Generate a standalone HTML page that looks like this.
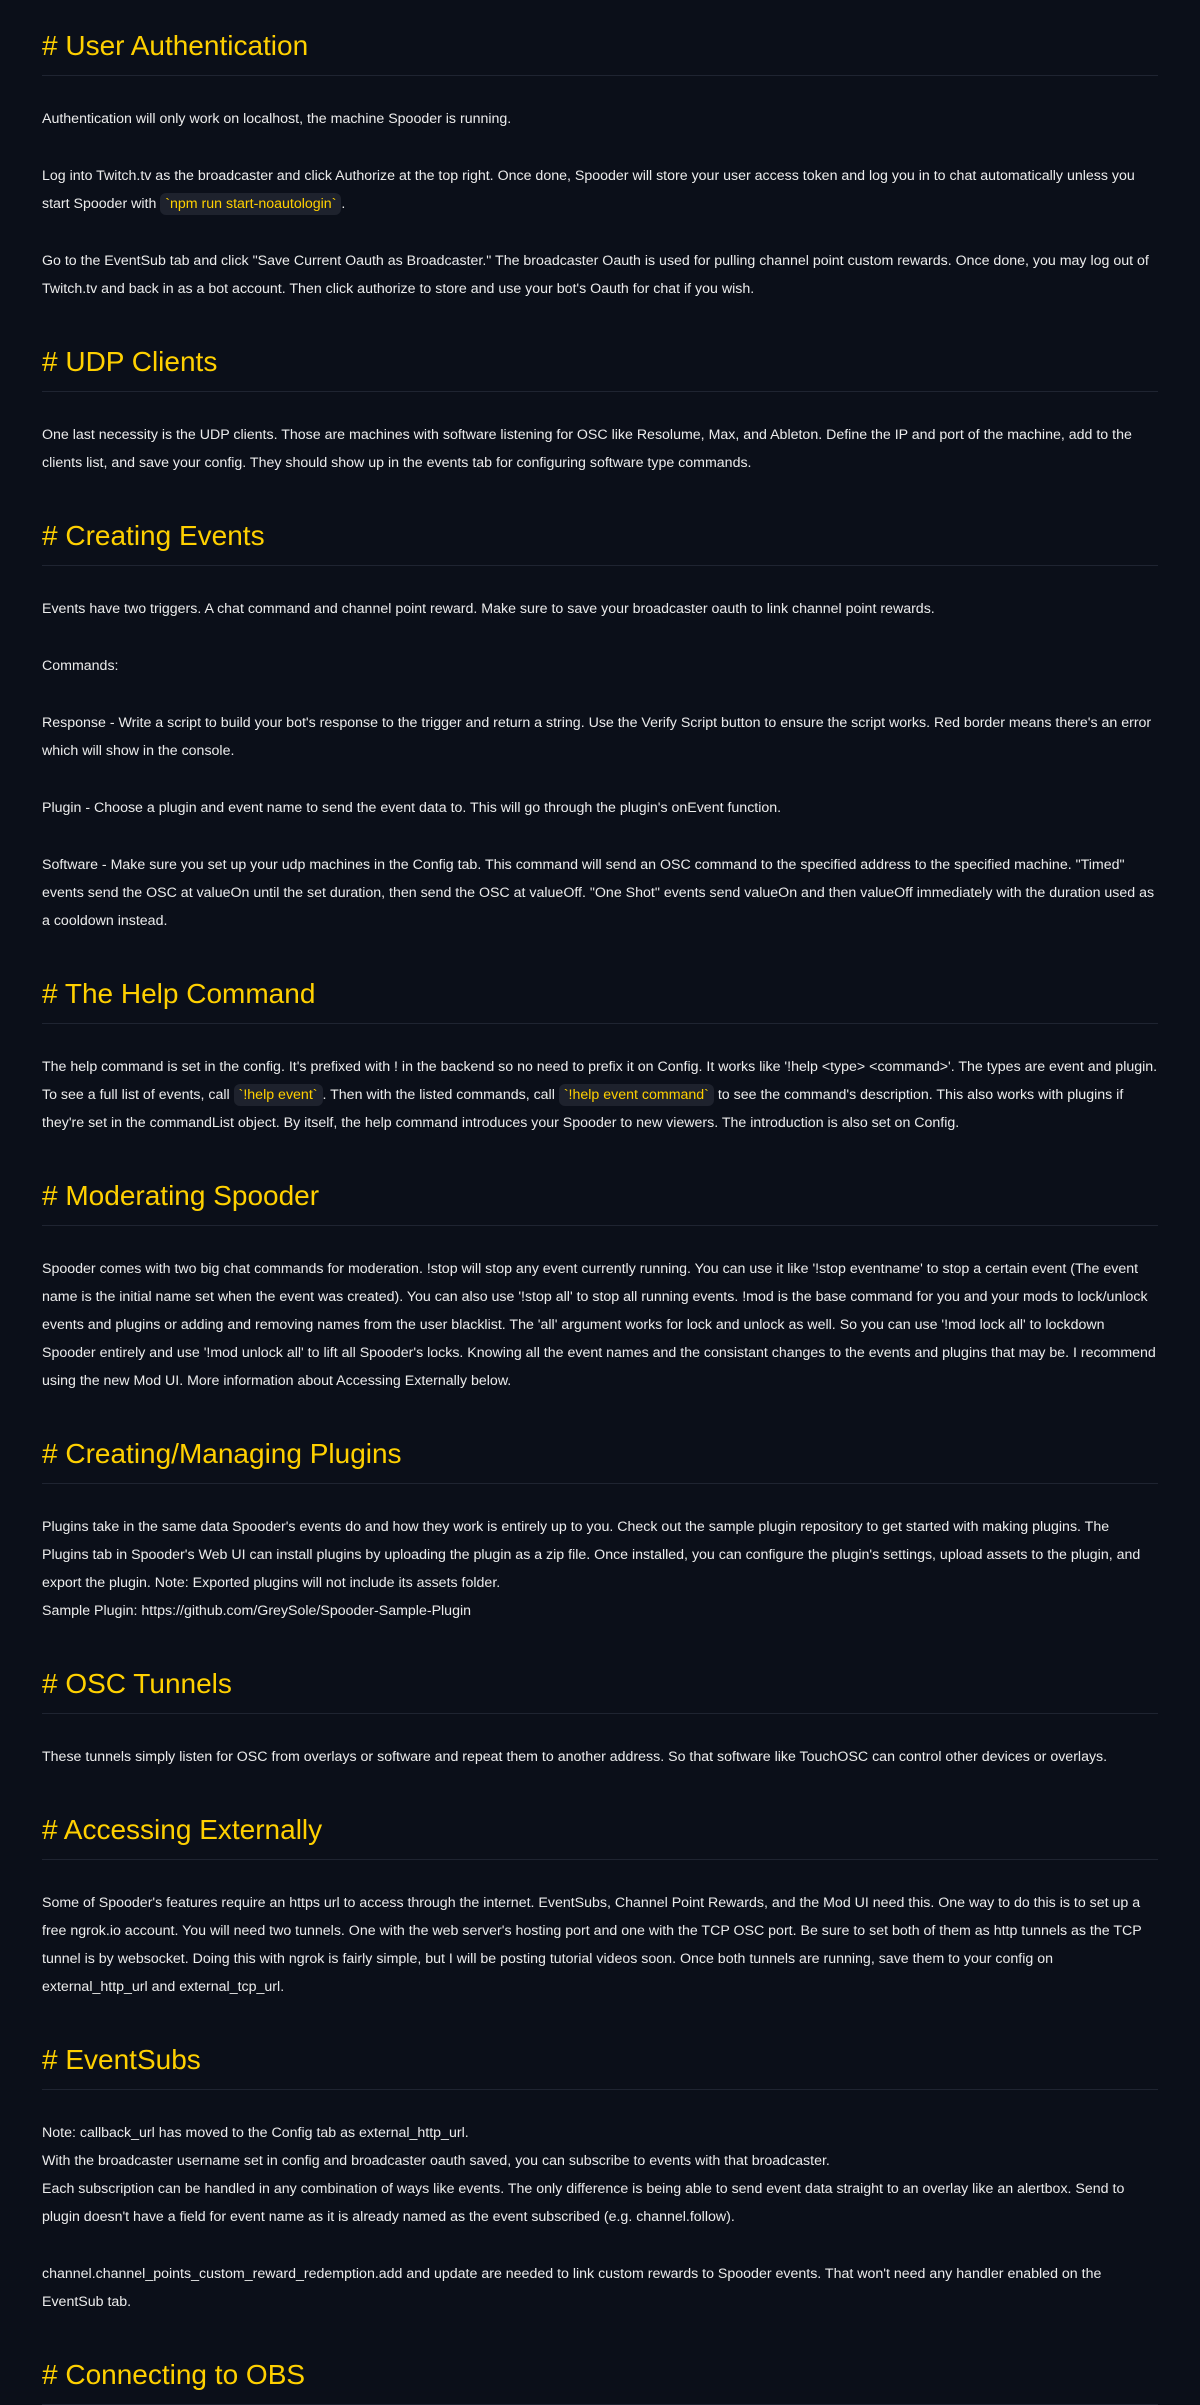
<!DOCTYPE html>
<html><head><meta charset="utf-8">
<style>
html,body{margin:0;padding:0;background:#0b0f19;}
body{width:1200px;height:2400px;overflow:hidden;font-family:"Liberation Sans",Arial,sans-serif;color:#ececec;}
.wrap{padding:16px 42px 0 42px;}
h2{font-size:28px;font-weight:normal;color:#ffd000;line-height:36px;margin:41px 0 0;padding-bottom:11px;border-bottom:1px solid #1f2431;}
h2:first-child{margin-top:12px;}
h2+p{margin-top:29px;}
p{font-size:14.2px;line-height:28px;margin:0 0 29px;}
code{font-family:"Liberation Sans",Arial,sans-serif;color:#ffd000;background:#1e222d;border-radius:6px;padding:3px 5px;font-size:14.2px;}
</style></head><body><div class="wrap">
<h2># User Authentication</h2>
<p>Authentication will only work on localhost, the machine Spooder is running.</p>
<p>Log into Twitch.tv as the broadcaster and click Authorize at the top right. Once done, Spooder will store your user access token and log you in to chat automatically unless you start Spooder with <code>`npm run start-noautologin`</code>.</p>
<p>Go to the EventSub tab and click "Save Current Oauth as Broadcaster." The broadcaster Oauth is used for pulling channel point custom rewards. Once done, you may log out of Twitch.tv and back in as a bot account. Then click authorize to store and use your bot's Oauth for chat if you wish.</p>
<h2># UDP Clients</h2>
<p>One last necessity is the UDP clients. Those are machines with software listening for OSC like Resolume, Max, and Ableton. Define the IP and port of the machine, add to the clients list, and save your config. They should show up in the events tab for configuring software type commands.</p>
<h2># Creating Events</h2>
<p>Events have two triggers. A chat command and channel point reward. Make sure to save your broadcaster oauth to link channel point rewards.</p>
<p>Commands:</p>
<p>Response - Write a script to build your bot's response to the trigger and return a string. Use the Verify Script button to ensure the script works. Red border means there's an error which will show in the console.</p>
<p>Plugin - Choose a plugin and event name to send the event data to. This will go through the plugin's onEvent function.</p>
<p>Software - Make sure you set up your udp machines in the Config tab. This command will send an OSC command to the specified address to the specified machine. "Timed" events send the OSC at valueOn until the set duration, then send the OSC at valueOff. "One Shot" events send valueOn and then valueOff immediately with the duration used as a cooldown instead.</p>
<h2># The Help Command</h2>
<p>The help command is set in the config. It's prefixed with ! in the backend so no need to prefix it on Config. It works like '!help &lt;type&gt; &lt;command&gt;'. The types are event and plugin. To see a full list of events, call <code>`!help event`</code>. Then with the listed commands, call <code>`!help event command`</code> to see the command's description. This also works with plugins if they're set in the commandList object. By itself, the help command introduces your Spooder to new viewers. The introduction is also set on Config.</p>
<h2># Moderating Spooder</h2>
<p>Spooder comes with two big chat commands for moderation. !stop will stop any event currently running. You can use it like '!stop eventname' to stop a certain event (The event name is the initial name set when the event was created). You can also use '!stop all' to stop all running events. !mod is the base command for you and your mods to lock/unlock events and plugins or adding and removing names from the user blacklist. The 'all' argument works for lock and unlock as well. So you can use '!mod lock all' to lockdown Spooder entirely and use '!mod unlock all' to lift all Spooder's locks. Knowing all the event names and the consistant changes to the events and plugins that may be. I recommend using the new Mod UI. More information about Accessing Externally below.</p>
<h2># Creating/Managing Plugins</h2>
<p>Plugins take in the same data Spooder's events do and how they work is entirely up to you. Check out the sample plugin repository to get started with making plugins. The Plugins tab in Spooder's Web UI can install plugins by uploading the plugin as a zip file. Once installed, you can configure the plugin's settings, upload assets to the plugin, and export the plugin. Note: Exported plugins will not include its assets folder.<br>Sample Plugin: https://github.com/GreySole/Spooder-Sample-Plugin</p>
<h2># OSC Tunnels</h2>
<p>These tunnels simply listen for OSC from overlays or software and repeat them to another address. So that software like TouchOSC can control other devices or overlays.</p>
<h2># Accessing Externally</h2>
<p>Some of Spooder's features require an https url to access through the internet. EventSubs, Channel Point Rewards, and the Mod UI need this. One way to do this is to set up a free ngrok.io account. You will need two tunnels. One with the web server's hosting port and one with the TCP OSC port. Be sure to set both of them as http tunnels as the TCP tunnel is by websocket. Doing this with ngrok is fairly simple, but I will be posting tutorial videos soon. Once both tunnels are running, save them to your config on external_http_url and external_tcp_url.</p>
<h2># EventSubs</h2>
<p>Note: callback_url has moved to the Config tab as external_http_url.<br>With the broadcaster username set in config and broadcaster oauth saved, you can subscribe to events with that broadcaster.<br>Each subscription can be handled in any combination of ways like events. The only difference is being able to send event data straight to an overlay like an alertbox. Send to plugin doesn't have a field for event name as it is already named as the event subscribed (e.g. channel.follow).</p>
<p>channel.channel_points_custom_reward_redemption.add and update are needed to link custom rewards to Spooder events. That won't need any handler enabled on the EventSub tab.</p>
<h2># Connecting to OBS</h2>
</div></body></html>
